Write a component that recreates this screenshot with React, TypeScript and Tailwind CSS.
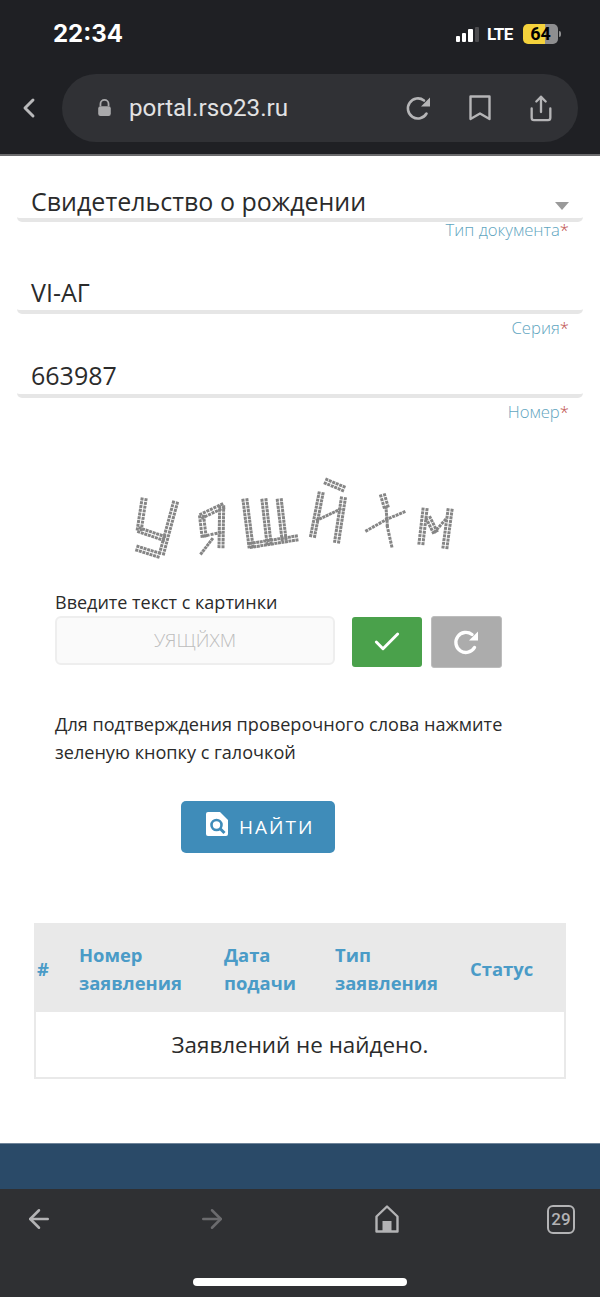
import { ArrowLeft, ArrowRight, Check, ChevronLeft, Share } from "lucide-react"

type Seg = [number, number, number, number, number?]

// captcha strokes in 3x coordinates; the fifth value is the number of dot rows
const captcha: Seg[] = [
  [72, 88, 58, 178, 2], [58, 180, 132, 205, 2], [166, 98, 125, 250, 2], [52, 235, 116, 255, 2],
  [308, 108, 245, 138, 2], [245, 140, 252, 198, 2], [252, 198, 300, 188, 1], [305, 110, 303, 230, 2], [276, 208, 244, 250, 1],
  [375, 90, 393, 230, 2], [432, 90, 447, 220, 2], [478, 90, 492, 208, 2], [393, 226, 530, 204, 2],
  [603, 70, 578, 198, 2], [670, 85, 650, 215, 2], [592, 150, 660, 118, 1], [618, 34, 670, 56, 2],
  [788, 76, 798, 110, 2], [798, 112, 802, 165, 1], [802, 170, 815, 228, 1], [740, 182, 800, 148, 1], [800, 148, 852, 126, 1],
  [915, 118, 903, 220, 2], [990, 120, 975, 232, 2], [925, 145, 945, 185, 2], [945, 185, 975, 150, 1],
]

function Captcha() {
  const dots: { x: number; y: number; a: number }[] = []
  captcha.forEach(([x1, y1, x2, y2, rows = 2]) => {
    const len = Math.hypot(x2 - x1, y2 - y1)
    const ux = (x2 - x1) / len
    const uy = (y2 - y1) / len
    const n = Math.round(len / 11)
    for (let i = 0; i <= n; i++) {
      for (let r = 0; r < rows; r++) {
        const off = (r - (rows - 1) / 2) * 12
        dots.push({
          x: x1 + ux * (len * i) / n - uy * off,
          y: y1 + uy * (len * i) / n + ux * off,
          a: (Math.atan2(uy, ux) * 180) / Math.PI,
        })
      }
    }
  })
  return (
    <svg viewBox="0 0 1050 300" className="block h-[100px] w-[350px] blur-[0.6px]">
      {dots.map((d, i) => (
        <rect
          key={i}
          x={d.x - 4.5}
          y={d.y - 4.5}
          width="9"
          height="9"
          fill="#858585"
          transform={`rotate(${d.a} ${d.x} ${d.y})`}
        />
      ))}
    </svg>
  )
}

function ReloadIcon({ className, width = 3 }: { className: string; width?: number }) {
  return (
    <svg viewBox="0 0 28 28" className={className} fill="none">
      <path d="M21.5 19.5A10 10 0 1 1 19 6.5" stroke="currentColor" strokeWidth={width} strokeLinecap="round" />
      <path d="M25 3.5V12.5H16Z" fill="currentColor" />
    </svg>
  )
}

function Field({ value, label, className, labelClass, valueClass }: { value: string; label: string; className: string; labelClass: string; valueClass: string }) {
  return (
    <div className={className}>
      <div className={`h-[38px] rounded-b-[5px] border-b-[4px] border-[#e6e6e6] pl-[14px] text-[25px] leading-[32px] text-[#2b2b2b] ${valueClass}`}>
        {value}
      </div>
      <div className={`pr-[14px] text-right text-[16.7px] font-light leading-[22px] text-[#5fa5c0] ${labelClass}`}>
        {label}
        <span className="text-[#c0504d]">*</span>
      </div>
    </div>
  )
}

export default function App() {
  return (
    <div className="flex h-[1297px] w-[600px] flex-col overflow-hidden bg-white font-['Open_Sans',sans-serif]">
      <header className="h-[156px] shrink-0 border-b-[2px] border-[#6b6b6d] bg-[#1f2024] font-['Roboto',sans-serif]">
        <div className="flex h-[74px] items-start justify-between pl-[53px] pr-[39px] pt-[18px]">
          <span className="font-['Inter',sans-serif] text-[24px] font-bold leading-[32px] text-white">22:34</span>
          <div className="flex items-center pt-[6px]">
            <div className="flex items-end gap-[2px]">
              <span className="h-[6px] w-[4px] rounded-[1px] bg-white" />
              <span className="h-[9px] w-[4px] rounded-[1px] bg-white" />
              <span className="h-[13px] w-[5px] rounded-[1px] bg-white" />
              <span className="h-[15px] w-[4px] rounded-[1px] bg-[#4b4b4e]" />
            </div>
            <span className="ml-[8px] w-[30px] text-[17px] font-bold leading-[20px] tracking-[-0.5px] text-white">LTE</span>
            <div className="ml-[6px] flex h-[20px] w-[35px] items-center justify-center rounded-[5px] bg-[linear-gradient(90deg,#f4d23c_0%,#f4d23c_64%,#8e8e90_64%,#8e8e90_100%)] text-[18px] font-bold leading-none text-black">
              64
            </div>
            <span className="ml-[1px] h-[6px] w-[2px] rounded-r-[2px] bg-[#8e8e90]" />
          </div>
        </div>
        <div className="flex items-center">
          <div className="flex w-[58px] justify-center">
            <ChevronLeft className="h-[32px] w-[32px] text-[#b9b9bb]" strokeWidth={2.2} />
          </div>
          <div className="ml-[4px] flex h-[68px] w-[516px] items-center rounded-full bg-[#303135] pl-[35px] pr-[23px]">
            <svg viewBox="0 0 16 20" className="h-[18px] w-[15px] text-[#a9a9ab]">
              <path d="M3.5 8V5.5a4.5 4.5 0 0 1 9 0V8" fill="none" stroke="currentColor" strokeWidth="2" />
              <rect x="1" y="8" width="14" height="11" rx="2.5" fill="currentColor" />
            </svg>
            <span className="ml-[17px] text-[24.2px] leading-[30px] text-[#e2e2e3]">portal.rso23.ru</span>
            <div className="ml-auto flex items-center text-[#b5b5b7]">
              <ReloadIcon className="h-[28px] w-[28px]" width={2.6} />
              <svg viewBox="0 0 22 26" className="ml-[36px] h-[26px] w-[22px]" fill="none">
                <path d="M1.5 1.5H20.5V24L11 18.5L1.5 24Z" stroke="currentColor" strokeWidth="2.4" strokeLinejoin="round" />
              </svg>
              <Share className="ml-[36px] h-[31px] w-[28px]" strokeWidth={2} />
            </div>
          </div>
        </div>
      </header>

      <main className="flex-1 px-[17px] pt-[28px]">
        <div className="relative">
          <Field value="Свидетельство о рождении" label="Тип документа" className="" labelClass="-mt-[3px]" valueClass="pt-[1px]" />
          <span className="absolute right-[14px] top-[18px] h-0 w-0 border-x-[7px] border-t-[8px] border-x-transparent border-t-[#9a9a9a]" />
        </div>
        <Field value="VI-АГ" label="Серия" className="mt-[35px]" labelClass="pt-[3px]" valueClass="" />
        <Field value="663987" label="Номер" className="mt-[21px]" labelClass="pt-[3px]" valueClass="-mt-[1px] h-[39px]" />

        <div className="ml-[103px] mt-[47px]">
          <Captcha />
        </div>

        <div className="px-[38px]">
          <div className="mt-[19px] text-[18px] leading-[26px] text-[#2b2b2b]">Введите текст с картинки</div>
          <div className="mt-[1px] flex h-[52px] items-center">
            <div className="flex h-[49px] w-[280px] self-start items-center justify-center rounded-[6px] border-[2px] border-[#eeeeee] bg-[#fafafa] text-[19px] font-light text-[#bdbdbd]">
              УЯЩЙХМ
            </div>
            <button className="ml-[17px] flex h-[50px] w-[70px] items-center justify-center rounded-[3px] bg-[#4aa14b] text-white">
              <Check className="h-[32px] w-[32px]" strokeWidth={2.2} />
            </button>
            <button className="ml-[9px] flex h-[52px] w-[71px] items-center justify-center rounded-[3px] border border-[#bdbdbd] bg-[#acacac] text-white">
              <ReloadIcon className="h-[28px] w-[28px]" width={3.4} />
            </button>
          </div>
          <p className="mt-[42px] text-[18.1px] leading-[28px] text-[#2b2b2b]">
            Для подтверждения проверочного слова нажмите зеленую кнопку с галочкой
          </p>
          <button className="ml-[126px] mt-[35px] flex h-[52px] w-[154px] items-center rounded-[5px] bg-[#3f8cb9] pl-[25px] text-white">
            <svg viewBox="0 0 22 24" className="-mt-[6px] h-[24px] w-[22px]">
              <path d="M2 0H14L22 8V22a2 2 0 0 1-2 2H2a2 2 0 0 1-2-2V2a2 2 0 0 1 2-2Z" fill="#ffffff" />
              <circle cx="10.5" cy="13" r="5" fill="none" stroke="#3f8cb9" strokeWidth="2.6" />
              <path d="M14 16.5L18.5 21" stroke="#3f8cb9" strokeWidth="3" />
            </svg>
            <span className="ml-[11px] text-[19px] leading-[28px] tracking-[2px]">НАЙТИ</span>
          </button>
        </div>

        <table className="ml-[17px] mt-[70px] w-[532px] table-fixed border-[2px] border-[#e9e9e9]">
          <thead>
            <tr className="h-[88px] bg-[#e9e9e9] text-left align-middle text-[18.4px] font-bold leading-[28px] text-[#4a9bc7]">
              <th className="w-[44px] pl-[1px]">#</th>
              <th className="w-[145px]">
                Номер
                <br />
                заявления
              </th>
              <th className="w-[111px]">
                Дата
                <br />
                подачи
              </th>
              <th className="w-[135px]">
                Тип
                <br />
                заявления
              </th>
              <th>Статус</th>
            </tr>
          </thead>
          <tbody>
            <tr className="h-[66px]">
              <td colSpan={5} className="text-center text-[22.4px] leading-[30px] text-[#2b2b2b]">
                Заявлений не найдено.
              </td>
            </tr>
          </tbody>
        </table>
      </main>

      <div className="h-[46px] shrink-0 border-t border-[#6f8499] bg-[#2a4a68]" />

      <footer className="h-[108px] shrink-0 bg-[#2f3033]">
        <div className="flex h-[60px] items-center text-[#b3b3b5]">
          <div className="flex w-[78px] justify-center">
            <ArrowLeft className="h-[30px] w-[30px]" strokeWidth={2} />
          </div>
          <div className="ml-[95px] flex w-[78px] justify-center text-[#6b6b6e]">
            <ArrowRight className="h-[30px] w-[30px]" strokeWidth={2} />
          </div>
          <div className="ml-[97px] flex w-[78px] justify-center">
            <svg viewBox="0 0 24 28" className="h-[28px] w-[24px]" fill="none">
              <path d="M1.5 26.5V11.5L12 1.5L22.5 11.5V26.5H1.5Z" stroke="currentColor" strokeWidth="2.4" strokeLinejoin="round" />
              <rect x="7.5" y="16" width="9" height="11" fill="currentColor" />
            </svg>
          </div>
          <div className="ml-[121px] flex h-[29px] w-[28px] items-center justify-center rounded-[6px] border-[2px] border-[#b3b3b5] font-['Roboto',sans-serif] text-[17px] font-medium leading-none">
            29
          </div>
        </div>
        <div className="mt-[29px] flex justify-center">
          <span className="h-[8px] w-[214px] rounded-full bg-white" />
        </div>
      </footer>
    </div>
  )
}
